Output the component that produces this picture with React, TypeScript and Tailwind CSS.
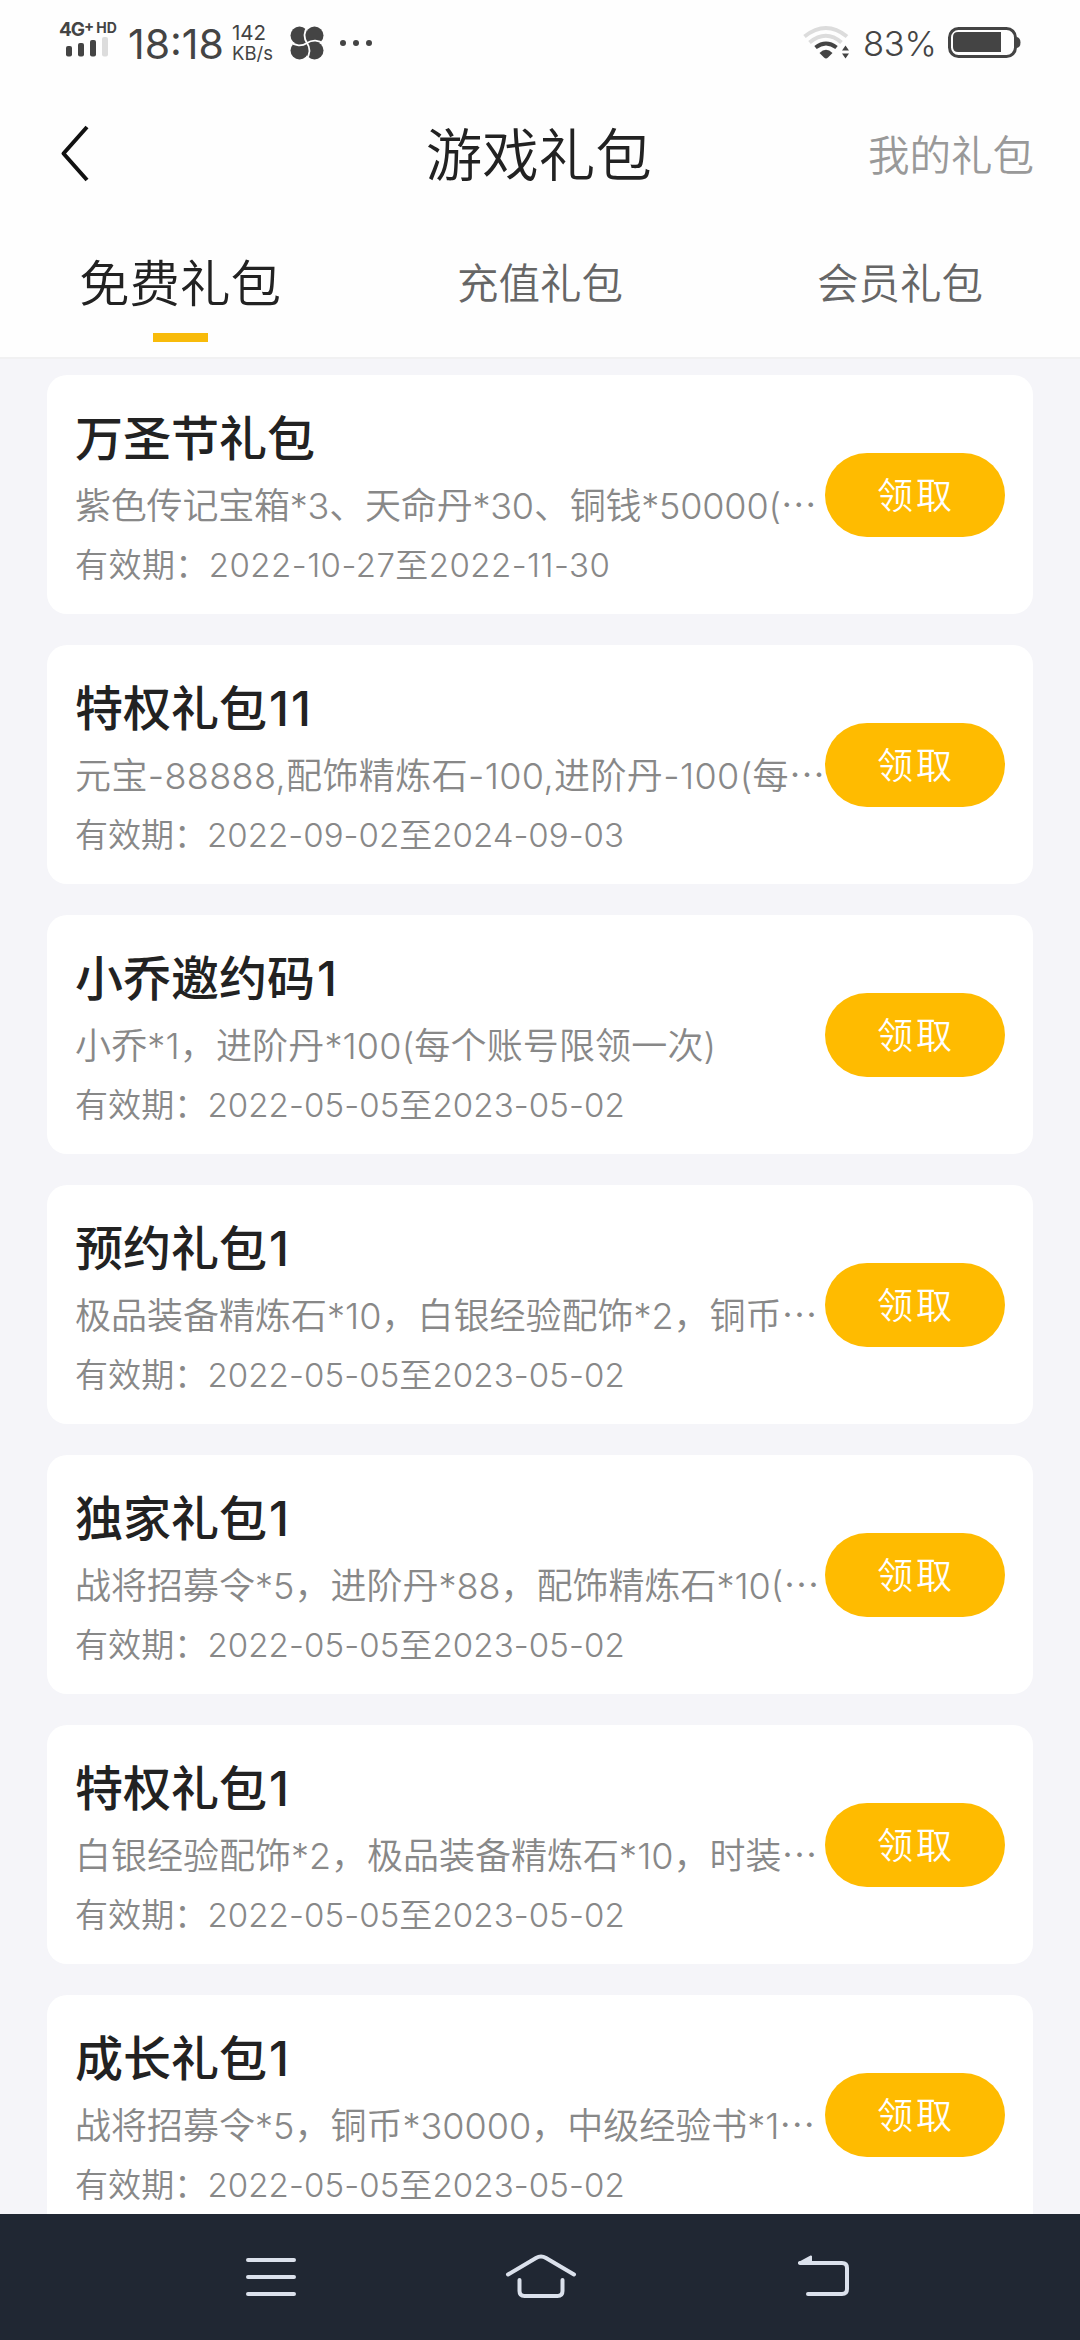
import type { ReactNode } from "react"
import clsx from "clsx"

interface GiftPack {
  title: string
  serial?: string
  content: string
  contentClass?: string
  clipped: boolean
  period: string
  periodClass?: string
}

const packs: GiftPack[] = [
  {
    title: "万圣节礼包",
    content: "紫色传记宝箱*3、天命丹*30、铜钱*50000(",
    contentClass: "tracking-[-0.2px]",
    clipped: true,
    period: "2022-10-27至2022-11-30",
    periodClass: "tracking-[0.45px]",
  },
  {
    title: "特权礼包",
    serial: "11",
    content: "元宝-88888,配饰精炼石-100,进阶丹-100(每",
    contentClass: "tracking-[0.38px]",
    clipped: true,
    period: "2022-09-02至2024-09-03",
    periodClass: "tracking-[0.02px]",
  },
  {
    title: "小乔邀约码",
    serial: "1",
    content: "小乔*1，进阶丹*100(每个账号限领一次)",
    contentClass: "tracking-[0.15px]",
    clipped: false,
    period: "2022-05-05至2023-05-02",
  },
  {
    title: "预约礼包",
    serial: "1",
    content: "极品装备精炼石*10，白银经验配饰*2，铜币",
    clipped: true,
    period: "2022-05-05至2023-05-02",
  },
  {
    title: "独家礼包",
    serial: "1",
    content: "战将招募令*5，进阶丹*88，配饰精炼石*10(",
    clipped: true,
    period: "2022-05-05至2023-05-02",
  },
  {
    title: "特权礼包",
    serial: "1",
    content: "白银经验配饰*2，极品装备精炼石*10，时装",
    clipped: true,
    period: "2022-05-05至2023-05-02",
  },
  {
    title: "成长礼包",
    serial: "1",
    content: "战将招募令*5，铜币*30000，中级经验书*1",
    clipped: true,
    period: "2022-05-05至2023-05-02",
  },
]

const tabs = ["免费礼包", "充值礼包", "会员礼包"]

function SignalIcon() {
  return (
    <svg width="46" height="20" viewBox="0 -2 46 20" fill="#444">
      <rect x="0" y="7" width="6" height="10.5" rx="2" />
      <rect x="12" y="4" width="6" height="13.5" rx="2" />
      <rect x="24" y="1" width="6" height="16.5" rx="2" />
      <rect x="36" y="-2" width="6" height="19.5" rx="2" fill="#dcdcdc" />
    </svg>
  )
}

function FanIcon() {
  return (
    <svg width="34" height="34" viewBox="0 0 34 34" fill="#444">
      <circle cx="9.5" cy="9.5" r="9" />
      <circle cx="24.5" cy="9.5" r="9" />
      <circle cx="24.5" cy="24.5" r="9" />
      <circle cx="9.5" cy="24.5" r="9" />
      <circle cx="17" cy="17" r="5" />
      <g fill="none" stroke="#fff" strokeWidth="1.8">
        <path d="M17 17C13.5 12 13.5 5 18.5 0" />
        <path d="M17 17C22 13.5 29 13.5 34 18.5" />
        <path d="M17 17C20.5 22 20.5 29 15.5 34" />
        <path d="M17 17C12 20.5 5 20.5 0 15.5" />
      </g>
    </svg>
  )
}

function WifiIcon() {
  return (
    <svg width="48" height="36" viewBox="0 0 48 36" fill="none" strokeWidth="4">
      <path d="M1.5 11.5Q23 -5.5 44 11.5" stroke="#dcdcdc" />
      <path d="M6.5 17.5Q23 4 38.5 17.5" stroke="#dcdcdc" />
      <path d="M12.5 22.5Q23 14.5 33.5 22.5" stroke="#444" />
      <path d="M16.5 28Q23 21.5 29.5 28L25 32.5Q23 34.5 21 32.5Z" fill="#444" />
      <path d="M39 25.5L42.5 20.5L46 25.5ZM39 28.5L42.5 33.5L46 28.5Z" fill="#444" />
    </svg>
  )
}

function BatteryIcon() {
  return (
    <svg width="74" height="32" viewBox="0 0 74 32">
      <rect x="1.5" y="1.5" width="66" height="28" rx="9" fill="none" stroke="#444" strokeWidth="3" />
      <path d="M10 5H53V25H10Q5 25 5 20V10Q5 5 10 5Z" fill="#444" />
      <path d="M69 10Q72.5 11 72.5 15.5T69 21Z" fill="#444" />
    </svg>
  )
}

function StatusBar() {
  return (
    <div className="flex h-[90px] items-start pl-[59px] pr-[58px] text-[#444]">
      <div className="w-[69px] pt-[20px]">
        <div className="flex h-[17px] items-start font-bold">
          <span className="text-[19px] leading-[20px] tracking-[-1px]">4G</span>
          <span className="text-[15px] leading-[12px]">+</span>
          <span className="ml-[2px] text-[14px] leading-[15px]">HD</span>
        </div>
        <div className="pl-[7px]">
          <SignalIcon />
        </div>
      </div>
      <span className="w-[104px] pt-[19px] text-[41px] leading-[50px]">18:18</span>
      <div className="w-[58px] pt-[23px] text-[18.5px] leading-[20px]">
        <div className="text-[20.5px]">142</div>
        <div>KB/s</div>
      </div>
      <div className="pt-[26px]">
        <FanIcon />
      </div>
      <div className="flex gap-[7px] pl-[16px] pt-[40px]">
        <i className="size-[6px] rounded-full bg-[#444]" />
        <i className="size-[6px] rounded-full bg-[#444]" />
        <i className="size-[6px] rounded-full bg-[#444]" />
      </div>
      <div className="ml-auto pt-[25px]">
        <WifiIcon />
      </div>
      <span className="w-[97px] pl-[12px] pt-[21px] text-[34.5px] font-[350] leading-[46px] tracking-[-0.3px]">83%</span>
      <div className="pt-[27px]">
        <BatteryIcon />
      </div>
    </div>
  )
}

function Header() {
  return (
    <div className="grid h-[128px] grid-cols-3 items-center pl-[60px] pr-[46px]">
      <svg width="30" height="58" viewBox="0 0 30 58" fill="none" stroke="#111" strokeWidth="4">
        <path d="M27 2L3.5 28.5L27 55" strokeLinejoin="round" />
      </svg>
      <h1 className="whitespace-nowrap pl-[41px] pt-[3px] text-[56.5px] font-[350] leading-[60px] text-[#222]">游戏礼包</h1>
      <span className="pt-[3px] text-right text-[41.5px] font-[350] leading-[60px] text-[#999]">我的礼包</span>
    </div>
  )
}

function Tabs() {
  return (
    <div className="grid h-[139px] grid-cols-3">
      {tabs.map((tab, index) => (
        <div key={tab} className="flex flex-col items-center pt-[36px]">
          <span
            className={clsx(
              "font-[350] leading-[60px]",
              index === 0 ? "text-[50.5px] text-[#222]" : "text-[41.5px] text-[#666]"
            )}
          >
            {tab}
          </span>
          {index === 0 && <span className="mt-[19px] h-[9px] w-[55px] bg-[#f8bb0a]" />}
        </div>
      ))}
    </div>
  )
}

function GiftCard({ pack }: { pack: GiftPack }) {
  return (
    <div className="flex h-[239px] shrink-0 items-start rounded-[20px] bg-white px-[28px]">
      <div className="w-[750px] whitespace-nowrap">
        <h2 className="mt-[34px] h-[60px] text-[48px] font-medium leading-[60px] text-[#222]">
          {pack.title}
          {pack.serial && <span className="pl-[2px] tracking-[2px]">{pack.serial}</span>}
        </h2>
        <p className={clsx("mt-[11px] h-[52px] text-[36px] font-[350] leading-[52px] text-[#888]", pack.contentClass)}>
          {pack.content}
          {pack.clipped && <span className="font-['Noto_Sans_CJK_SC',sans-serif] leading-none">…</span>}
        </p>
        <p
          className={clsx(
            "mt-[8px] h-[50px] text-[33px] font-[350] leading-[50px] text-[#888]",
            pack.periodClass ?? "tracking-[0.1px]"
          )}
        >
          有效期：{pack.period}
        </p>
      </div>
      <button className="mt-[78px] h-[84px] w-[180px] shrink-0 rounded-full bg-[#ffbb00] pl-[2px] pt-[2px] text-[36px] font-[350] tracking-[3px] text-white">
        领取
      </button>
    </div>
  )
}

function NavKey({ className, children }: { className?: string; children: ReactNode }) {
  return (
    <svg
      width="72"
      height="46"
      viewBox="0 0 72 46"
      fill="none"
      stroke="#dbe1ec"
      strokeWidth="4"
      strokeLinecap="round"
      strokeLinejoin="round"
      className={className}
    >
      {children}
    </svg>
  )
}

function NavBar() {
  return (
    <div className="flex h-[126px] shrink-0 items-start gap-[198px] bg-[#202733] pl-[235px] pt-[40px]">
      <NavKey>
        <path d="M13 6H59M13 23H59M13 40H59" />
      </NavKey>
      <NavKey>
        <path d="M3 20.5L31 4Q36 1 41 4L69 20.5" />
        <path d="M14.5 26V37Q14.5 42 19.5 42H52.5Q57.5 42 57.5 37V26" />
      </NavKey>
      <NavKey className="ml-3">
        <path d="M13 9H55Q60 9 60 14V35Q60 40 55 40H21" />
        <path d="M12 9L24 2.5V9Z" fill="#dbe1ec" strokeWidth="2" />
      </NavKey>
    </div>
  )
}

export default function App() {
  return (
    <div
      lang="zh-CN"
      className="flex h-[2340px] w-[1080px] flex-col overflow-hidden bg-[#fefefe] font-[Inter,'Noto_Sans_CJK_SC',sans-serif]"
    >
      <StatusBar />
      <Header />
      <Tabs />
      <div className="flex min-h-0 flex-1 flex-col gap-[31px] overflow-hidden border-t-2 border-[#f1f1f2] bg-[#f5f5f9] px-[47px] pt-[16px]">
        {packs.map((pack) => (
          <GiftCard key={pack.title + pack.serial} pack={pack} />
        ))}
      </div>
      <NavBar />
    </div>
  )
}
